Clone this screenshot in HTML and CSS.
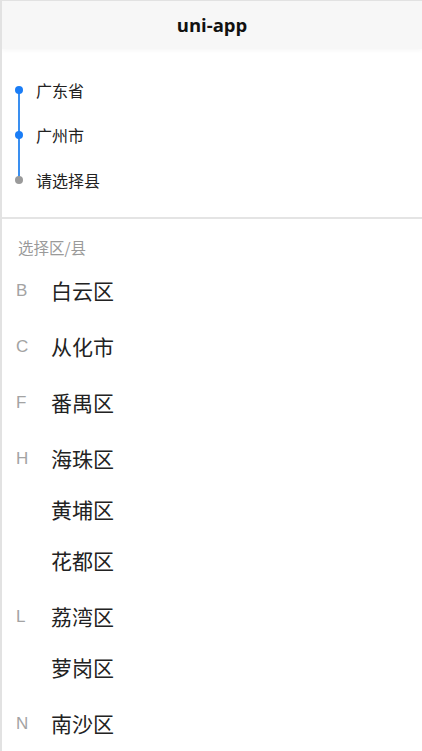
FILE: index.html
```html
<!DOCTYPE html>
<html lang="zh">
<head>
<meta charset="utf-8">
<link rel="stylesheet" href="styles.css">
</head>
<body>
<div class="page">
  <header class="nav"><span class="nav-title">uni-app</span></header>
  <section class="steps">
    <div class="step done"><span class="dot"></span><span class="step-text">广东省</span></div>
    <div class="step done"><span class="dot"></span><span class="step-text">广州市</span></div>
    <div class="step pending"><span class="dot"></span><span class="step-text">请选择县</span></div>
  </section>
  <div class="subtitle">选择区/县</div>
  <div class="list">
    <div class="group">
      <div class="row"><span class="letter">B</span><span class="name">白云区</span></div>
    </div>
    <div class="group">
      <div class="row"><span class="letter">C</span><span class="name">从化市</span></div>
    </div>
    <div class="group">
      <div class="row"><span class="letter">F</span><span class="name">番禺区</span></div>
    </div>
    <div class="group">
      <div class="row"><span class="letter">H</span><span class="name">海珠区</span></div>
      <div class="row"><span class="letter"></span><span class="name">黄埔区</span></div>
      <div class="row"><span class="letter"></span><span class="name">花都区</span></div>
    </div>
    <div class="group">
      <div class="row"><span class="letter">L</span><span class="name">荔湾区</span></div>
      <div class="row"><span class="letter"></span><span class="name">萝岗区</span></div>
    </div>
    <div class="group">
      <div class="row"><span class="letter">N</span><span class="name">南沙区</span></div>
    </div>
  </div>
</div>
</body>
</html>
```
FILE: styles.css
```css
html, body {
  margin: 0;
  padding: 0;
  background: #ffffff;
}
body {
  font-family: "Noto Sans CJK SC", "Noto Sans", sans-serif;
  color: #333333;
}
.page {
  min-height: 751px;
  border-left: 2px solid #e2e2e2;
  border-top: 1px solid #e2e2e2;
  box-sizing: border-box;
  overflow: hidden;
}
.nav {
  height: 48px;
  background: #f7f7f7;
  display: flex;
  align-items: center;
  justify-content: center;
  box-shadow: 0 2px 4px rgba(0,0,0,0.03);
}
.nav-title {
  font-family: "Open Sans", "Noto Sans", sans-serif;
  font-weight: 700;
  font-size: 18.5px;
  color: #111111;
  margin-top: -2px;
}
.steps {
  padding: 18px 0 15px 0;
  border-bottom: 2px solid #e4e4e4;
  display: flex;
  flex-direction: column;
}
.step {
  height: 45px;
  display: flex;
  align-items: center;
  position: relative;
}
.dot {
  width: 8px;
  height: 8px;
  border-radius: 50%;
  margin-left: 13px;
  margin-right: 13px;
  background: #1a7df6;
  position: relative;
  z-index: 1;
}
.step.pending .dot {
  background: #9a9a9a;
}
.step.done::after {
  content: "";
  position: absolute;
  left: 16px;
  top: 22px;
  width: 2px;
  height: 45px;
  background: #3a8ff0;
}
.step-text {
  font-size: 16px;
  color: #222222;
  line-height: 1;
}
.subtitle {
  font-size: 15.5px;
  color: #9a9a9a;
  padding: 18px 0 0 16px;
  height: 31px;
  line-height: 20px;
  box-sizing: content-box;
}
.list {
  display: flex;
  flex-direction: column;
  gap: 5px;
  margin-top: -3px;
}
.group {
  display: flex;
  flex-direction: column;
}
.row {
  height: 51px;
  display: flex;
  align-items: center;
}
.letter {
  width: 35px;
  padding-left: 14px;
  font-family: "Liberation Sans", Arial, sans-serif;
  font-size: 17px;
  line-height: 1;
  color: #a3a3a3;
  margin-top: -1px;
}
.name {
  font-size: 21px;
  color: #222222;
  line-height: 1;
}
```
